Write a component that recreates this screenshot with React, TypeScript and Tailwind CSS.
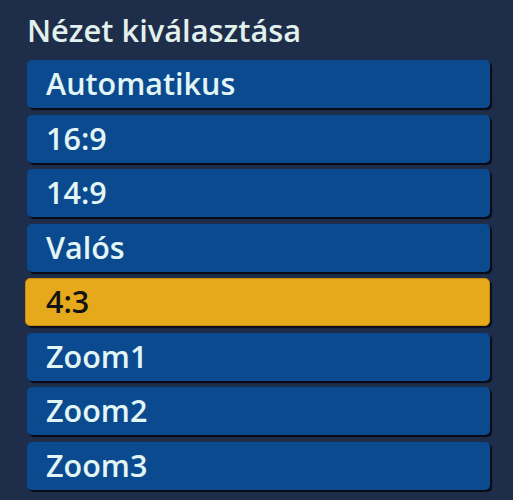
import React from "react";

const items = ["Automatikus", "16:9", "14:9", "Valós", "4:3", "Zoom1", "Zoom2", "Zoom3"];

export default function App() {
  return (
    <div
      className="w-[513px] h-[500px] bg-[#1e2d4a] overflow-hidden pl-[27px] pr-[23px] pt-[10px]"
      style={{ fontFamily: '"Open Sans", "DejaVu Sans", sans-serif' }}
    >
      <div className="text-[30.8px] font-semibold leading-[40px] text-[#e2f1ec] h-[50px] whitespace-nowrap">Nézet kiválasztása</div>
      <div className="flex flex-col gap-[6.5px]">
        {items.map((t) => {
          const sel = t === "4:3";
          return (
            <div
              key={t}
              className={
                sel
                  ? "h-[48px] -ml-[2px] rounded-[5px] bg-[#e6a91c] border border-[#c98a10] shadow-[2px_2px_1px_#0a0f1c] flex items-center pl-[20px] text-[30.5px] font-semibold text-[#141414]"
                  : "h-[48px] rounded-[5px] bg-[#0c4a90] shadow-[2px_2px_1px_#070b16] flex items-center pl-[19px] text-[30.5px] font-semibold text-[#e2f6f6]"
              }
            >
              {t}
            </div>
          );
        })}
      </div>
    </div>
  );
}
